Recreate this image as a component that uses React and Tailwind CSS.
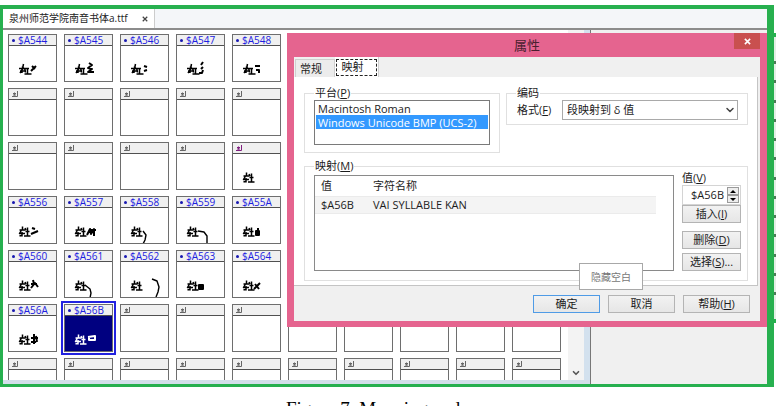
import React, { useState } from 'react'
import { ChevronDown } from 'lucide-react'

// codes of one block share the root stroke, the tail differs per code
const ROOT_A = 'M10 22.5h10M14.5 18l-1 5-2.5 4M13 20.5l3 3 .5 3M11 25h6M15.500 28h7M18.500 23v5M13 23v4'
const ROOT_B = 'M10.500 22h6M13.500 18.500v3M12.500 22l-2 3.500h5.500M13 24v4.500M10.500 28l3-1M16.500 23.500h4M18.500 19.500v8M15 28h6.500M16 20l1 2'

const CELLS = [
  [['$A544', 'M22 25l5-5M23 20l3 3'], ['$A545', 'M24 17l3 2-4 3 4 1-4 3h6'], ['$A546', 'M23 20l3 1M23 25l3-1'], ['$A547', 'M24 19l2-3M24 23l2-2M22 27h3l1-3'], ['$A548', 'M22 20h5M23 24h3v3']],
  [null, null, null, null, null],
  [null, null, null, null, ['', '']],
  [['$A556', 'M23 20l3 1M22 26l7-3'], ['$A557', 'M22 27l3-6 1 5 3-5v7M26 22h5'], ['$A558', 'M22 23l3 4-1 5-2 4', 'thin'], ['$A559', 'M21 23l6 1 3 4v8', 'thin'], ['$A55A', 'M23 23h3v4h-3zM25 20v7']],
  [['$A560', 'M22 26l4-5 3 4M24 18l1 4M22 22h6'], ['$A561', 'M20 23l5 4 1 4-1 5', 'thin'], ['$A562', 'M31 17l5 2 2 6-1 5-2 5', 'thin'], ['$A563', 'M22 23h4v4h-4zM22 25h5'], ['$A564', 'M21 27l6-6M22 22l4 5']],
  [['$A56A', 'M22 22h7M25 18v10M22 26h5M27 20l1 6'], ['$A56B', 'M23 21l7-1v4h-6v-4'], null, null, null],
  [null, null, null, null, null],
]

const Glyph = ({ root, tail, kind }) => (
  <svg viewBox="0 0 47 35" className="w-full h-[35px]" fill="none" stroke="currentColor" strokeLinejoin="round">
    <path d={root} strokeWidth="1.5" />
    <path d={tail} strokeWidth={kind === 'thin' ? 1.4 : 2} />
  </svg>
)

const Cell = ({ data, root, selected, onSelect }) => (
  <button type="button" onClick={onSelect} className={`flex flex-col justify-start items-stretch h-12 text-left border border-[#6e6e6e] ${selected ? 'bg-[#000080] text-white outline-2 outline-offset-1 outline-[#2222e0]' : 'bg-white text-black'}`}>
    <span className="flex items-center gap-[3px] h-[11px] shrink-0 pl-[3px] bg-[#f0f0f0] border-b border-[#505050] text-[10px] leading-[10px] text-[#2020e0]">
      {data && data[0] ? (
        <><span className="size-[3px] rounded-full bg-[#1818b0]" />{data[0]}</>
      ) : (
        <svg viewBox="0 0 6 6" className={`size-[6px] ${data ? 'text-[#802080]' : 'text-[#666]'}`} fill="none" stroke="currentColor">
          <path d="M5.5 0v5.5H0M1 2.5h3M1 4h3M2.5 1.5v3" />
        </svg>
      )}
    </span>
    {data && <Glyph root={root} tail={data[1]} kind={data[2]} />}
  </button>
)

const Button = ({ children, className = '', primary }) => (
  <button type="button" className={`border bg-linear-to-b from-[#f2f2f2] to-[#e6e6e6] leading-4 whitespace-nowrap ${primary ? 'border-[#4f9be6]' : 'border-[#b4b4b4]'} ${className}`}>{children}</button>
)

const Properties = ({ code }) => {
  const [platform, setPlatform] = useState('win')
  return (
    <section role="dialog" aria-labelledby="dlg-title" className="absolute top-6 left-[284px] right-0 px-[7px] pb-[6px] bg-[#e5648f] text-[#1c1c1c] text-[11px] leading-[14px]">
      <header className="relative h-6 flex items-center justify-center">
        <h2 id="dlg-title" className="text-[13px] text-[#4a1f30]">属性</h2>
        <button type="button" aria-label="关闭" className="absolute top-0 right-0 w-[26px] h-4 flex items-center justify-center bg-[#c9504f] text-white">
          <svg viewBox="0 0 8 8" className="size-[7px]" stroke="currentColor" strokeWidth="1.8"><path d="M1 1l6 6M7 1L1 7" /></svg>
        </button>
      </header>
      <div className="bg-[#f0f0f0]">
        <div role="tablist" className="flex items-end h-5 pl-px">
          <button type="button" role="tab" aria-selected="false" className="w-10 h-[18px] pr-2 border border-b-0 border-[#cfcfcf] bg-[#ececec]">常规</button>
          <button type="button" role="tab" aria-selected="true" className="w-[44px] h-5 p-px bg-white border-r border-[#cfcfcf]">
            <span className="block h-[17px] pr-2 border border-dashed border-[#222]">映射</span>
          </button>
        </div>
        <div className="mr-[2px] pl-[10px] pr-[9px] pt-[9px] pb-1 bg-white border-r border-b border-[#c4c4c4]">
          <div className="flex gap-[6px] items-start">
            <fieldset className="w-[196px] shrink-0 border border-[#e0e0e0] px-[9px] pb-[7px]">
              <legend className="px-px">平台(<u>P</u>)</legend>
              <select size="3" aria-label="平台" value={platform} onChange={(e) => setPlatform(e.target.value)}
                className="block w-full h-[45px] px-px border border-[#7a7a7a] bg-white overflow-hidden outline-none">
                <option value="mac" className="h-[14px] min-h-0 p-0 pl-[2px]">Macintosh Roman</option>
                <option value="win" className="h-[14px] min-h-0 p-0 pl-[2px] checked:bg-[linear-gradient(#3399ff,#3399ff)] checked:[-webkit-text-fill-color:white]">Windows Unicode BMP (UCS-2)</option>
              </select>
            </fieldset>
            <fieldset className="flex-1 min-w-0 border border-[#e0e0e0] px-[9px] pb-1">
              <legend className="px-px">编码</legend>
              <div className="flex items-center">
                <label htmlFor="format" className="w-[46px] shrink-0 px-px">格式(<u>F</u>)</label>
                <div className="relative flex-1">
                  <select id="format" className="block w-full h-5 pl-1 border border-[#a9a9a9] bg-white appearance-none">
                    <option>段映射到 δ 值</option>
                  </select>
                  <ChevronDown className="absolute right-[2px] top-1 size-3 text-[#444] pointer-events-none" strokeWidth={3} />
                </div>
              </div>
            </fieldset>
          </div>
          <fieldset className="mt-[6px] border border-[#e0e0e0] pl-[9px] pr-[6px] pt-[2px] pb-[9px]">
            <legend className="px-px">映射(<u>M</u>)</legend>
            <div className="flex items-end gap-2">
              <div className="flex-1 h-24 border border-[#8a8a8a] pr-[17px]">
                <table className="w-full text-left border-collapse">
                  <thead>
                    <tr className="h-5">
                      <th className="w-[52px] pl-[6px] font-normal">值</th>
                      <th className="pl-[6px] font-normal">字符名称</th>
                    </tr>
                  </thead>
                  <tbody>
                    <tr className="h-[17px] bg-[#f4f4f4] border-y border-[#ebebeb]">
                      <td className="pl-[6px]">{code}</td>
                      <td className="pl-[6px]">VAI SYLLABLE KAN</td>
                    </tr>
                  </tbody>
                </table>
              </div>
              <div className="w-[59px] h-24 shrink-0 flex flex-col justify-end">
                <label htmlFor="value" className="shrink-0 leading-[14px]">值(<u>V</u>)</label>
                <div className="flex items-center h-5 shrink-0 pr-px border border-[#d4d4d4] bg-white">
                  <input id="value" defaultValue="$A56B" className="min-w-0 flex-1 text-right pr-[3px] outline-none" />
                  <div className="flex flex-col w-3 h-4">
                    <button type="button" aria-label="增加" className="flex-1 flex items-center justify-center border border-[#9a9a9a] bg-[#ededed]">
                      <svg viewBox="0 0 6 3" className="w-[6px] h-[3px]"><path d="M3 0l3 3H0z" /></svg>
                    </button>
                    <button type="button" aria-label="减少" className="flex-1 flex items-center justify-center border border-[#9a9a9a] bg-[#ededed]">
                      <svg viewBox="0 0 6 3" className="w-[6px] h-[3px]"><path d="M3 3l3-3H0z" /></svg>
                    </button>
                  </div>
                </div>
                <Button className="h-[18px] shrink-0">插入(<u>I</u>)</Button>
                <Button className="h-[18px] shrink-0 mt-2">删除(<u>D</u>)</Button>
                <Button className="h-[18px] shrink-0 mt-1">选择(<u>S</u>)...</Button>
              </div>
            </div>
          </fieldset>
        </div>
        <footer className="flex justify-end gap-2 pt-[9px] pb-2 pr-[10px]">
          <Button primary className="w-[67px] h-[18px]">确定</Button>
          <Button className="w-[67px] h-[18px]">取消</Button>
          <Button className="w-[67px] h-[18px]">帮助(<u>H</u>)</Button>
        </footer>
      </div>
      <div role="tooltip" className="absolute bottom-[37px] right-[124px] w-16 h-[27px] flex items-center justify-center bg-white border border-[#a8a8a8] text-[10px] text-[#777]">隐藏空白</div>
    </section>
  )
}

const App = () => {
  const [selected, setSelected] = useState('5-1')

  return (
    <div className="h-screen flex flex-col pt-[5px] pr-[6px] bg-white overflow-hidden font-['Open_Sans','Noto_Sans_CJK_SC',sans-serif]">
      <main className="relative flex-1 min-h-0 flex flex-col border-[#27b04f] border-t-4 border-l-[3px] border-r-[7px] border-b-[3px]">
        <nav className="flex h-[21px] bg-[#f4f6f9] border-b-2 border-[#8c8c8c]">
          <div className="flex items-center gap-[14px] px-[6px] bg-white border-r border-[#ccc] text-[10px] text-[#222] whitespace-nowrap">
            <a href="#font">泉州师范学院南音书体a.ttf</a>
            <button type="button" aria-label="关闭">
              <svg viewBox="0 0 8 8" className="size-[6px]" stroke="#444" strokeWidth="1.6"><path d="M1 1l6 6M7 1L1 7" /></svg>
            </button>
          </div>
        </nav>
        <div className="flex-1 min-h-0 flex">
          <div className="flex-1 min-w-0 flex border-b-4 border-[#d3dfea]">
            <div className="flex-1 min-w-0 overflow-hidden pl-[5px] pt-1 bg-white">
              <div className="grid grid-cols-[repeat(10,49px)] gap-x-[7px] gap-y-[6px]">
                {CELLS.map((row, r) => [...row, null, null, null, null, null].map((data, c) => (
                  <Cell key={`${r}-${c}`} data={data} root={r === 0 ? ROOT_A : ROOT_B} selected={selected === `${r}-${c}`} onSelect={() => setSelected(`${r}-${c}`)} />
                )))}
              </div>
            </div>
            <div className="w-4 flex items-end justify-center pb-[2px] bg-[#f3f3f3]">
              <ChevronDown className="size-[10px] text-[#555]" strokeWidth={4} />
            </div>
            <div className="w-[6px] bg-[#d3e1ee]" />
          </div>
          <div className="w-[177px] shrink-0 border-l border-[#777] bg-[#f0f0f0]" />
        </div>
        <Properties code="$A56B" />
        <div className="absolute top-6 -right-[9px] w-[2px] h-[290px] py-6 flex flex-col justify-between bg-[#e4efe6] border-y-4 border-[#27b04f]">
          {Array.from({ length: 13 }, (_, i) => <span key={i} className="h-[3px] bg-[#4d7a58]" />)}
        </div>
      </main>
      <p className="h-[19px] shrink-0 overflow-hidden pl-[286px] pt-3 text-[19px] leading-5 text-black font-['Liberation_Serif',serif]">Figure 7. Mapping codes</p>
    </div>
  )
}
export default App
